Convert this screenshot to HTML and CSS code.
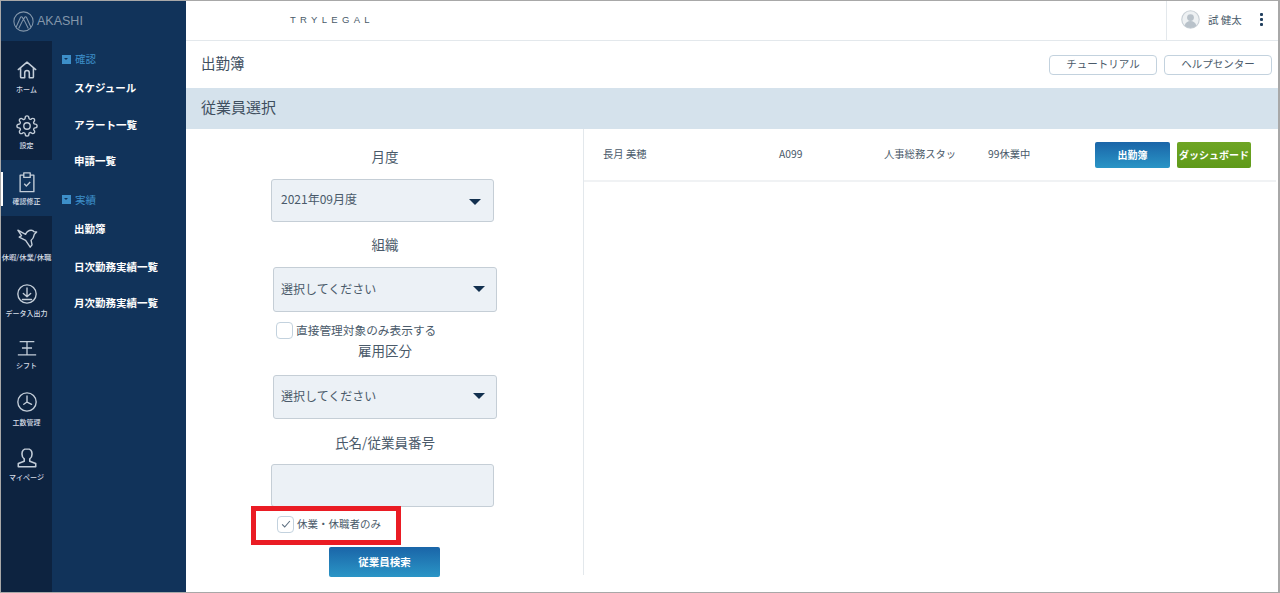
FILE: index.html
```html
<!DOCTYPE html>
<html lang="ja">
<head>
<meta charset="utf-8">
<title>出勤簿</title>
<link rel="stylesheet" href="styles.css">
</head>
<body>
<div class="app">
  <aside class="sidebar">
    <div class="brand">
      <svg class="brand-mark" viewBox="0 0 24 24" width="21" height="21" fill="none" stroke="#8497ab" stroke-width="1.200" stroke-linejoin="round"><circle cx="12" cy="12" r="11"/><path d="M3.500 18.500 8.500 7.500c.6-1.300 1.700-1.300 2.300 0L12 10l1.200-2.500c.6-1.300 1.700-1.300 2.300 0l5 11"/><path d="M6.500 20 11 11c.5-1 1.500-1 2 0l4.500 9"/></svg>
      <span class="brand-name">AKASHI</span>
    </div>
    <div class="side-body">
      <nav class="rail">
        <a class="rail-item">
          <svg viewBox="0 0 24 24" width="22" height="22" fill="none" stroke="#c3cdd8" stroke-width="1.700" stroke-linejoin="round" stroke-linecap="round"><path d="M2.500 11.500 12 3.500l9.500 8M5 10v9.500a1 1 0 0 0 1 1h3.500V15a2.500 2.500 0 0 1 5 0v5.500H18a1 1 0 0 0 1-1V10"/></svg>
          <span>ホーム</span>
        </a>
        <a class="rail-item">
          <svg viewBox="0 0 24 24" width="22" height="22" fill="none" stroke="#c3cdd8" stroke-width="1.500" stroke-linejoin="round"><circle cx="12" cy="12" r="3.500"/><path d="M19.400 15a1.650 1.650 0 0 0 .33 1.820l.06.06a2 2 0 0 1 0 2.830 2 2 0 0 1-2.830 0l-.06-.06a1.650 1.650 0 0 0-1.820-.33 1.650 1.650 0 0 0-1 1.510V21a2 2 0 0 1-2 2 2 2 0 0 1-2-2v-.09A1.650 1.650 0 0 0 9 19.400a1.650 1.650 0 0 0-1.820.33l-.06.06a2 2 0 0 1-2.830 0 2 2 0 0 1 0-2.830l.06-.06a1.650 1.650 0 0 0 .33-1.820 1.650 1.650 0 0 0-1.510-1H3a2 2 0 0 1-2-2 2 2 0 0 1 2-2h.09A1.650 1.650 0 0 0 4.600 9a1.650 1.650 0 0 0-.33-1.820l-.06-.06a2 2 0 0 1 0-2.830 2 2 0 0 1 2.830 0l.06.06a1.650 1.650 0 0 0 1.820.33H9a1.650 1.650 0 0 0 1-1.510V3a2 2 0 0 1 2-2 2 2 0 0 1 2 2v.09a1.650 1.650 0 0 0 1 1.510 1.650 1.650 0 0 0 1.820-.33l.06-.06a2 2 0 0 1 2.830 0 2 2 0 0 1 0 2.830l-.06.06a1.650 1.650 0 0 0-.33 1.820V9a1.650 1.650 0 0 0 1.510 1H21a2 2 0 0 1 2 2 2 2 0 0 1-2 2h-.09a1.650 1.650 0 0 0-1.510 1z"/></svg>
          <span>設定</span>
        </a>
        <a class="rail-item active">
          <svg viewBox="0 0 24 24" width="22" height="22" fill="none" stroke="#c3cdd8" stroke-width="1.500" stroke-linejoin="round"><path d="M8.500 4.500H4.500v18h15v-18h-4M8.500 2h7v5h-7zM9 14l2.300 2.300L15.500 12"/></svg>
          <span>確認修正</span>
        </a>
        <a class="rail-item">
          <svg viewBox="0 0 24 24" width="22" height="22" fill="none" stroke="#c3cdd8" stroke-width="1.500" stroke-linejoin="round"><path d="M2 3.500 10.500 8c1-2.500 3-4.500 6-4.500 1.500 0 2.500.5 3 1.500l3 .5-2.500 2.500c-.5 3-1.500 5-3.500 6.500l1 5-2 2.500-5-7.500L3.500 11 6 9.500z"/></svg>
          <span class="tight">休暇/休業/休職</span>
        </a>
        <a class="rail-item compact">
          <svg viewBox="0 0 24 24" width="22" height="22" fill="none" stroke="#c3cdd8" stroke-width="1.500" stroke-linecap="round" stroke-linejoin="round"><circle cx="12" cy="12" r="10"/><path d="M12 5.500V15M8 11.500l4 3.500 4-3.500M7 18h10"/></svg>
          <span>データ入出力</span>
        </a>
        <a class="rail-item compact">
          <svg viewBox="0 0 24 24" width="22" height="22" fill="none" stroke="#c3cdd8" stroke-width="1.400"><path d="M4 5h16M6.500 12h11M2 19.500h20M12 5v14.500"/></svg>
          <span class="near">シフト</span>
        </a>
        <a class="rail-item">
          <svg viewBox="0 0 24 24" width="22" height="22" fill="none" stroke="#c3cdd8" stroke-width="1.500" stroke-linecap="round"><circle cx="12" cy="12" r="10"/><path d="M12 5.500V12l5 2.500M12 12l-3.500 2.500"/></svg>
          <span class="far">工数管理</span>
        </a>
        <a class="rail-item">
          <svg viewBox="0 0 24 24" width="22" height="22" fill="none" stroke="#c3cdd8" stroke-width="1.700" stroke-linejoin="round"><path d="M12 2c-3.800 0-5.500 2.500-5.500 5.500 0 2.500 1 4.500 2.500 5.500v2.500L2.500 18v3.500h19V18L15 15.500V13c1.500-1 2.500-3 2.500-5.500C17.500 4.500 15.800 2 12 2z"/></svg>
          <span>マイページ</span>
        </a>
      </nav>
      <nav class="subnav">
        <h3 class="sub-head"><i class="sub-mark"></i>確認</h3>
        <a class="sub-link">スケジュール</a>
        <a class="sub-link">アラート一覧</a>
        <a class="sub-link">申請一覧</a>
        <h3 class="sub-head second"><i class="sub-mark"></i>実績</h3>
        <a class="sub-link">出勤簿</a>
        <a class="sub-link">日次勤務実績一覧</a>
        <a class="sub-link">月次勤務実績一覧</a>
      </nav>
    </div>
  </aside>

  <main class="main">
    <header class="topbar">
      <div class="company">TRYLEGAL</div>
      <div class="user">
        <svg class="avatar" viewBox="0 0 20 20" width="19" height="19"><circle cx="10" cy="10" r="9.200" fill="#eef1f3" stroke="#c9d0d6" stroke-width="1.200"/><circle cx="10" cy="8" r="3.600" fill="#b9c2ca"/><path d="M3.800 16.500c.8-3.500 3.300-5 6.200-5s5.400 1.500 6.200 5a9 9 0 0 1-12.400 0z" fill="#b9c2ca"/></svg>
        <span class="user-name">試 健太</span>
        <span class="kebab"><i></i><i></i><i></i></span>
      </div>
    </header>

    <div class="title-row">
      <h1>出勤簿</h1>
      <div class="help">
        <button class="outline">チュートリアル</button>
        <button class="outline">ヘルプセンター</button>
      </div>
    </div>

    <div class="band">従業員選択</div>

    <div class="content">
      <form class="filters">
        <div class="label first">月度</div>
        <div class="field select narrow"><span>2021年09月度</span><i class="caret"></i></div>
        <div class="label l2">組織</div>
        <div class="field select wide"><span>選択してください</span><i class="caret"></i></div>
        <label class="check plain"><i class="box"></i>直接管理対象のみ表示する</label>
        <div class="label l3">雇用区分</div>
        <div class="field select wide s3"><span>選択してください</span><i class="caret"></i></div>
        <div class="label l4">氏名/従業員番号</div>
        <div class="field narrow text"></div>
        <div class="flagged">
          <label class="check"><i class="box">
            <svg viewBox="0 0 14 14" width="12" height="12" fill="none" stroke="#5d6f80" stroke-width="1.300"><path d="M2.500 7.500 5.500 10.500 11.500 3.500"/></svg>
          </i>休業・休職者のみ</label>
        </div>
        <button type="button" class="primary search">従業員検索</button>
      </form>

      <section class="results">
        <div class="row">
          <span class="c-name">長月 美穂</span>
          <span class="c-code">A099</span>
          <span class="c-dept">人事総務スタッ</span>
          <span class="c-status">99休業中</span>
          <button class="primary attend">出勤簿</button>
          <button class="dash">ダッシュボード</button>
        </div>
      </section>
    </div>
  </main>
</div>
</body>
</html>
```
FILE: styles.css
```css
* { box-sizing: border-box; }
html, body { margin: 0; height: 100%; overflow: hidden; }
body {
  font-family: "Noto Sans CJK JP", "Noto Sans", sans-serif;
  color: #4a5a6a;
  background: #fff;
}
.app {
  display: flex;
  height: 593px;
  width: 1280px;
  border: 1px solid #a8a8a8;
  border-width: 1px 2px 1px 1px;
}

/* Sidebar */
.sidebar { width: 185px; background: #11335a; display: flex; flex-direction: column; flex: none; }
.brand { height: 40px; display: flex; align-items: center; gap: 3px; padding-left: 12px; }
.brand-name { font-family: "Liberation Sans", sans-serif; font-size: 12.500px; color: #8497ab; }
.side-body { flex: 1; display: flex; }
.rail { width: 51px; background: #0d2340; padding-top: 7px; }
.rail-item {
  height: 56px;
  display: flex;
  flex-direction: column;
  align-items: center;
  padding-top: 11px;
  gap: 3px;
  position: relative;
}
.rail-item.compact { height: 54px; }
.rail-item span { font-size: 7px; line-height: 10px; color: #d5dde6; white-space: nowrap; font-weight: 500; }
.rail-item .tight { font-size: 7.400px; letter-spacing: -.05px; }
.rail-item .near { margin-top: -2px; }
.rail-item .far { margin-top: 1px; }
.rail-item.active { background: #11335a; }
.rail-item.active::before {
  content: "";
  position: absolute;
  left: 0; top: 12px; bottom: 10px;
  width: 2px;
  background: #fff;
}
.subnav { flex: 1; padding: 10px 0 0 10px; }
.sub-head {
  margin: 0;
  height: 16px;
  font-size: 10.500px;
  font-weight: 400;
  line-height: 16px;
  color: #3d8fc9;
  display: flex;
  align-items: center;
  gap: 4px;
}
.sub-head.second { margin-top: 12px; }
.sub-mark {
  width: 9px; height: 9px;
  background: #3d8fc9;
  position: relative;
}
.sub-mark::after {
  content: "";
  position: absolute;
  left: 2px; top: 3px;
  border: 2.500px solid transparent;
  border-top-color: #11335a;
  border-bottom: 0;
}
.sub-link {
  display: block;
  height: 36.500px;
  margin-left: 12px;
  line-height: 36px;
  font-size: 10.500px;
  font-weight: 700;
  color: #fff;
  white-space: nowrap;
}
.sub-head + .sub-link { margin-top: 3px; }
.sub-head.second + .sub-link { margin-top: 3px; height: 38px; }

/* Main column */
.main { flex: 1; min-width: 0; display: flex; flex-direction: column; }
.topbar {
  height: 40px;
  flex: none;
  display: flex;
  align-items: center;
  justify-content: space-between;
  border-bottom: 1px solid #e3e8ec;
}
.company {
  margin: -2px 0 0 104px;
  font-family: "Liberation Sans", sans-serif;
  font-size: 9.500px;
  letter-spacing: 4.300px;
  color: #4a5a6a;
}
.user {
  width: 112px;
  height: 100%;
  border-left: 1px solid #e3e8ec;
  display: flex;
  align-items: center;
  padding-left: 14px;
}
.avatar { margin-top: -2px; }
.user-name { font-size: 10.500px; margin: -3px 0 0 8px; color: #4a5a6a; white-space: nowrap; }
.kebab { display: flex; flex-direction: column; gap: 2px; margin: -2px 0 0 18px; }
.kebab i { width: 3px; height: 3px; background: #22405f; border-radius: 1px; }

.title-row {
  height: 47px;
  flex: none;
  display: flex;
  align-items: center;
  justify-content: space-between;
  padding: 0 6px 0 15px;
}
h1 { margin: -4px 0 0; font-size: 14.500px; font-weight: 400; color: #3f4f5f; }
.help { display: flex; gap: 7px; }
.outline {
  width: 108px;
  height: 20px;
  padding: 0;
  border: 1.500px solid #c3d2de;
  border-radius: 4px;
  background: #fff;
  font: 400 10.500px/1 "Noto Sans CJK JP", sans-serif;
  color: #4a5a6a;
}
.band {
  height: 41px;
  flex: none;
  background: #d5e2ec;
  line-height: 38px;
  padding-left: 15px;
  font-size: 15px;
  color: #3f4f5f;
}

.content { flex: 1; display: flex; min-height: 0; }
.filters {
  width: 398px;
  height: 446px;
  flex: none;
  border-right: 1px solid #e3e8ec;
  display: flex;
  flex-direction: column;
}
.label { text-align: center; width: 398px; font-size: 13.500px; line-height: 18px; color: #4a5a6a; }
.label.first { margin-top: 18px; margin-bottom: 14px; }
.label.l2 { margin-top: 13px; margin-bottom: 14px; }
.label.l3 { margin-top: 2px; margin-bottom: 16px; }
.label.l4 { margin-top: 14px; margin-bottom: 13px; }
.field {
  background: #ecf1f6;
  border: 1.500px solid #c5ced6;
  border-radius: 3px;
  flex: none;
}
.field.narrow { width: 223px; height: 43px; margin-left: 85px; }
.field.wide { width: 224px; height: 45px; margin-left: 87px; }
.field.s3 { height: 44px; }
.select {
  display: flex;
  align-items: center;
  justify-content: space-between;
  font-size: 12px;
  color: #4a5a6a;
  padding: 0 12px 0 9px;
}
.select.wide { padding: 0 11px 0 7px; }
.select span { margin-top: -3px; }
.select.narrow span { margin-top: -5px; }
.caret {
  border: 6px solid transparent;
  border-top: 6px solid #12304f;
  border-bottom: 0;
}
.select.wide .caret { margin-top: -2px; }
.select.narrow .caret { margin-top: 2px; }
.check {
  display: flex;
  align-items: center;
  gap: 3px;
  font-size: 10.500px;
  line-height: 18px;
  color: #4a5a6a;
  white-space: nowrap;
}
.check.plain { margin: 9px 0 0 90px; font-size: 11.700px; }
.box {
  width: 17px; height: 17px;
  border: 1.500px solid #c3d2de;
  border-radius: 4px;
  background: #fff;
  display: flex;
  align-items: center;
  justify-content: center;
}
.flagged {
  width: 150px;
  height: 39px;
  margin: -1px 0 0 65px;
  border: 5px solid #ea1c24;
  padding: 4px 0 0 21px;
  flex: none;
}
.primary {
  padding: 0;
  border: 0;
  border-radius: 2px;
  background: linear-gradient(#1a65a8, #2a95c6);
  color: #fff;
  font: 700 10.500px/1 "Noto Sans CJK JP", sans-serif;
}
.search { width: 111px; height: 30px; margin: 2px 0 0 143px; flex: none; }

.results { flex: 1; min-width: 0; }
.row {
  height: 53px;
  margin-right: 2px;
  border-bottom: 2px solid #f0f2f4;
  display: flex;
  align-items: center;
  font-size: 10.300px;
  color: #4a5a6a;
  white-space: nowrap;
}
.row span { margin-top: -3px; }
.c-name { width: 176px; padding-left: 19px; }
.c-code { width: 124px; padding-left: 19px; }
.c-dept { width: 104px; padding-left: 0; overflow: hidden; }
.c-status { width: 107px; padding-left: 0; }
.attend { width: 75px; height: 26px; margin-top: 0; font-size: 10px; }
.dash {
  width: 74px; height: 26px;
  margin-left: 7px;
  padding: 0;
  border: 0;
  border-radius: 2px;
  background: linear-gradient(#6ea524, #5f9a1a);
  color: #fff;
  font: 700 10px/1 "Noto Sans CJK JP", sans-serif;
  white-space: nowrap;
}
```
